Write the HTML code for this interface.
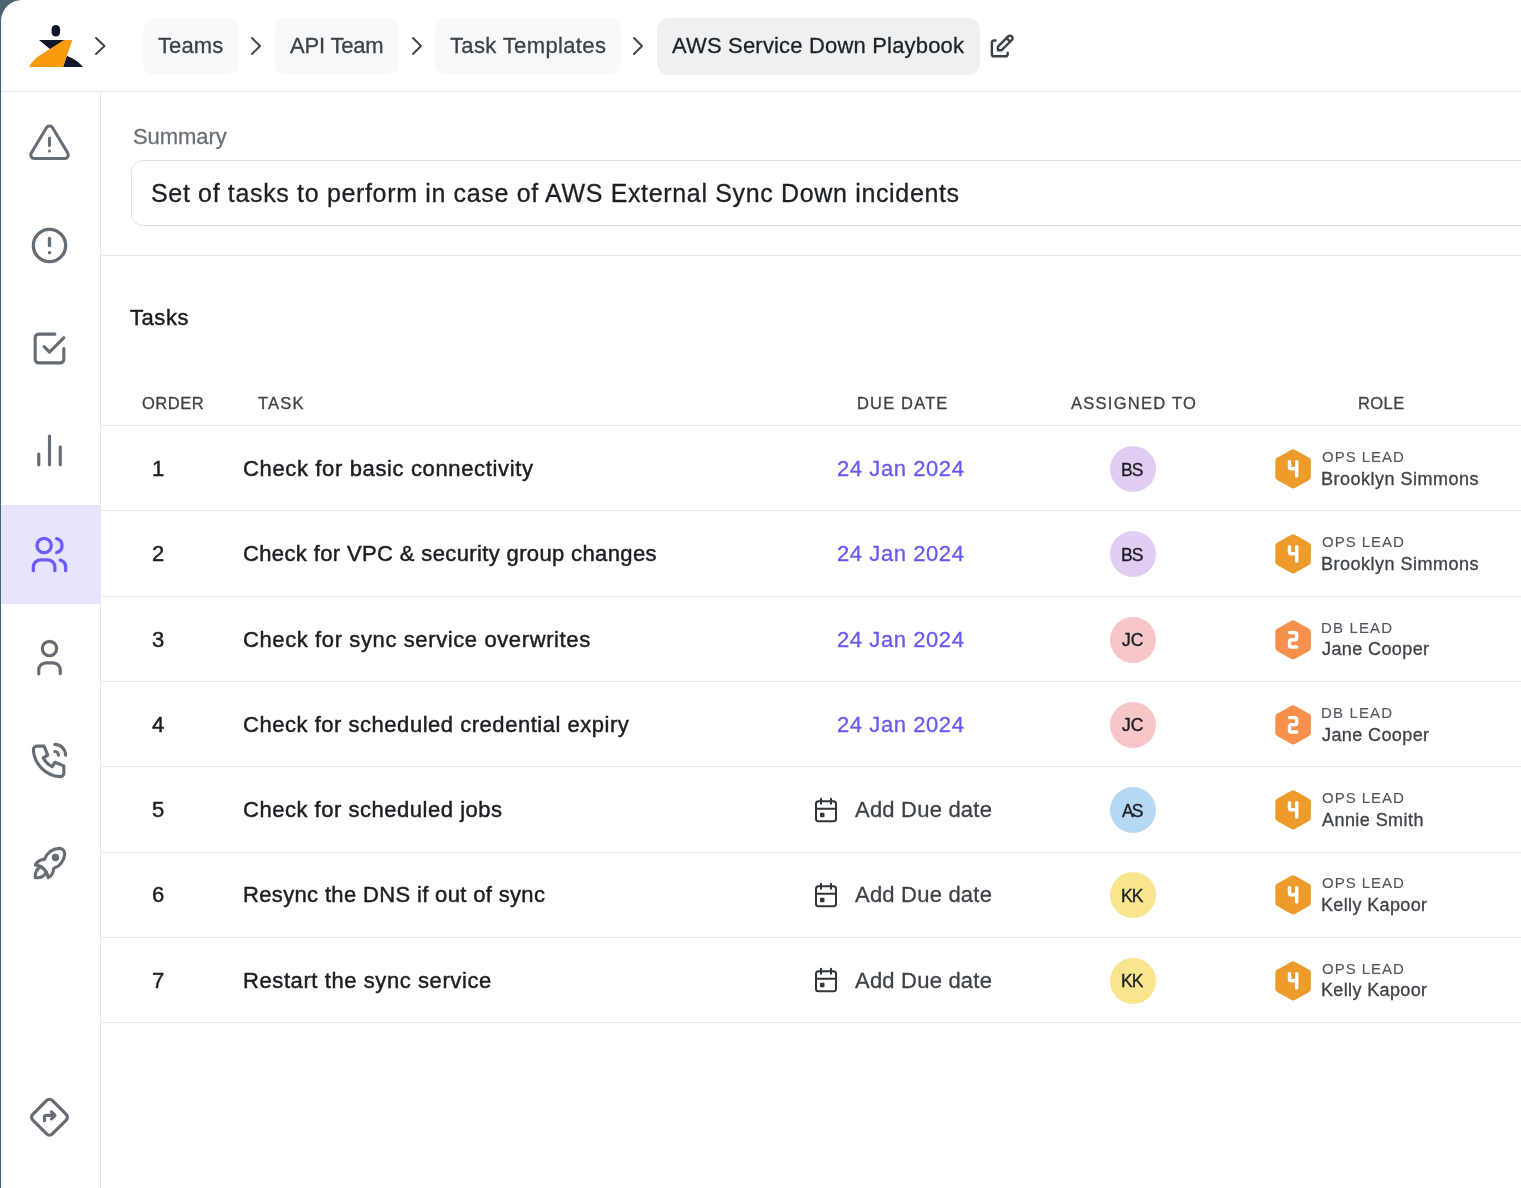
<!DOCTYPE html><html><head><meta charset="utf-8"><style>
html,body{margin:0;padding:0;}
body{width:1521px;height:1188px;overflow:hidden;background:#4b6470;position:relative;font-family:"Liberation Sans",sans-serif;}
#panel{position:absolute;left:1px;top:0;width:1560px;height:1230px;background:#fff;border-top-left-radius:21px;overflow:hidden;}
.t{position:absolute;white-space:nowrap;will-change:transform;-webkit-text-stroke:0.3px currentColor;}
.hl{position:absolute;height:1px;background:#e5e7ea;}
.vl{position:absolute;width:1px;background:#e5e7ea;}
svg{position:absolute;overflow:visible;}
.pill{position:absolute;background:#f8f9fa;border-radius:12px;}
.av{position:absolute;width:46px;height:46px;border-radius:50%;}
</style></head><body><div id="panel">
<div class="hl" style="left:0;top:91px;width:1560px;"></div>
<div class="vl" style="left:99px;top:92px;height:1200px;"></div>
<div class="hl" style="left:100px;top:255px;width:1500px;"></div>
<svg style="left:-1px;top:0px" width="120" height="90" viewBox="0 0 120 90">
<rect x="51.6" y="24.9" width="8.5" height="11.5" rx="4.25" fill="#0f1728"/>
<path d="M39 40 L72.3 40 L50.2 49.2 Z" fill="#0f1728"/>
<path d="M63.1 66.9 L83.1 66.9 Q76 59 66.7 55.8 Z" fill="#0f1728"/>
<path d="M64 40 L72.3 40 L63.1 66.9 L28.9 66.9 Q33 59 45 52 Z" fill="#f99b0c"/>
<path d="M96 38 L104.5 46 L96 54" fill="none" stroke="#3d4247" stroke-width="1.9" stroke-linecap="round" stroke-linejoin="round"/>
</svg>
<div class="pill" style="left:142.4px;top:17.5px;width:95.6px;height:57px;background:#f8f9fa"></div>
<div class="t" id="bc1" style="left:157.00px;top:35.28px;font-size:22px;line-height:22px;color:#3d4247;font-weight:400;letter-spacing:0.100px;">Teams</div>
<div class="pill" style="left:273.9px;top:17.5px;width:124.0px;height:57px;background:#f8f9fa"></div>
<div class="t" id="bc2" style="left:289.00px;top:35.28px;font-size:22px;line-height:22px;color:#3d4247;font-weight:400;letter-spacing:-0.185px;">API Team</div>
<div class="pill" style="left:433.5px;top:17.5px;width:186.4px;height:57px;background:#f8f9fa"></div>
<div class="t" id="bc3" style="left:449.00px;top:35.28px;font-size:22px;line-height:22px;color:#3d4247;font-weight:400;letter-spacing:0.360px;">Task Templates</div>
<div class="pill" style="left:655.5px;top:17.5px;width:323.1px;height:57px;background:#eff0f2"></div>
<div class="t" id="bc4" style="left:671.00px;top:35.28px;font-size:22px;line-height:22px;color:#1d2126;font-weight:400;letter-spacing:0.176px;">AWS Service Down Playbook</div>
<svg style="left:249.4px;top:34.3px" width="16" height="24" viewBox="0 0 16 24"><path d="M2 4 L10 12 L2 20" fill="none" stroke="#3d4247" stroke-width="1.9" stroke-linecap="round" stroke-linejoin="round"/></svg>
<svg style="left:409.5px;top:34.3px" width="16" height="24" viewBox="0 0 16 24"><path d="M2 4 L10 12 L2 20" fill="none" stroke="#3d4247" stroke-width="1.9" stroke-linecap="round" stroke-linejoin="round"/></svg>
<svg style="left:631.2px;top:34.3px" width="16" height="24" viewBox="0 0 16 24"><path d="M2 4 L10 12 L2 20" fill="none" stroke="#3d4247" stroke-width="1.9" stroke-linecap="round" stroke-linejoin="round"/></svg>
<svg style="left:985.6px;top:31.8px" width="29.2" height="29.2" viewBox="0 0 24 24"><g fill="none" stroke="#3d4247" stroke-width="2" stroke-linecap="round" stroke-linejoin="round">
<path d="M7 7h-1a2 2 0 0 0 -2 2v9a2 2 0 0 0 2 2h9a2 2 0 0 0 2 -2v-1"/>
<path d="M20.385 6.585a2.1 2.1 0 0 0 -2.97 -2.97l-8.415 8.385v3h3l8.385 -8.415z"/>
<path d="M16 5l3 3"/></g></svg>
<div class="t" id="sum" style="left:132.00px;top:126.08px;font-size:22px;line-height:22px;color:#6b7178;font-weight:400;letter-spacing:-0.051px;">Summary</div>
<div style="position:absolute;left:129.5px;top:160px;width:1500px;height:66px;border:1px solid #dfe1e5;border-radius:12px;box-sizing:border-box"></div>
<div class="t" id="inp" style="left:150.00px;top:181.34px;font-size:25px;line-height:25px;color:#1c2024;font-weight:400;letter-spacing:0.658px;">Set of tasks to perform in case of AWS External Sync Down incidents</div>
<div class="t" id="tasks" style="left:129.00px;top:307.08px;font-size:22px;line-height:22px;color:#1a1d21;font-weight:400;letter-spacing:0.550px;-webkit-text-stroke:0.45px #1a1d21;">Tasks</div>
<div class="t" id="h1" style="left:141.00px;top:394.53px;font-size:16.5px;line-height:16.5px;color:#3d4247;font-weight:400;letter-spacing:0.525px;">ORDER</div>
<div class="t" id="h2" style="left:257.00px;top:394.53px;font-size:16.5px;line-height:16.5px;color:#3d4247;font-weight:400;letter-spacing:1.198px;">TASK</div>
<div class="t" id="h3" style="left:856.00px;top:394.53px;font-size:16.5px;line-height:16.5px;color:#3d4247;font-weight:400;letter-spacing:1.168px;">DUE DATE</div>
<div class="t" id="h4" style="left:1070.00px;top:394.53px;font-size:16.5px;line-height:16.5px;color:#3d4247;font-weight:400;letter-spacing:1.270px;">ASSIGNED TO</div>
<div class="t" id="h5" style="left:1357.00px;top:394.53px;font-size:16.5px;line-height:16.5px;color:#3d4247;font-weight:400;letter-spacing:0.432px;">ROLE</div>
<div class="hl" style="left:100px;top:425px;width:1500px;"></div>
<div class="hl" style="left:100px;top:510px;width:1500px;"></div>
<div class="hl" style="left:100px;top:596px;width:1500px;"></div>
<div class="hl" style="left:100px;top:681px;width:1500px;"></div>
<div class="hl" style="left:100px;top:766px;width:1500px;"></div>
<div class="hl" style="left:100px;top:852px;width:1500px;"></div>
<div class="hl" style="left:100px;top:937px;width:1500px;"></div>
<div class="hl" style="left:100px;top:1022px;width:1500px;"></div>
<div class="t" id="n0" style="left:151.00px;top:458.18px;font-size:22px;line-height:22px;color:#1a1d21;font-weight:400;letter-spacing:0.000px;-webkit-text-stroke:0.45px #1a1d21;">1</div>
<div class="t" id="task0" style="left:242.00px;top:458.18px;font-size:22px;line-height:22px;color:#1a1d21;font-weight:400;letter-spacing:0.639px;-webkit-text-stroke:0.45px #1a1d21;">Check for basic connectivity</div>
<div class="t" id="date0" style="left:836.00px;top:458.18px;font-size:22px;line-height:22px;color:#6659f5;font-weight:400;letter-spacing:0.580px;">24 Jan 2024</div>
<div class="av" style="left:1109.3px;top:446.00px;background:#e0cdf2"></div>
<div class="t" id="ini0" style="left:1120.00px;top:461.59px;font-size:17.5px;line-height:17.5px;color:#1a1d21;font-weight:400;letter-spacing:-1.000px;-webkit-text-stroke:0.35px #1a1d21;">BS</div>
<svg style="left:1269px;top:440.00px" width="50" height="60" viewBox="0 0 50 60"><path d="M23.10 12.70 L37.40 20.75 L37.40 36.85 L23.10 44.90 L8.80 36.85 L8.80 20.75 Z" fill="#ed9c2b" stroke="#ed9c2b" stroke-width="7" stroke-linejoin="round"/><g transform="translate(1.50 7.20) scale(1.8)" fill="none" stroke="#fff" stroke-width="1.9" stroke-linecap="round" stroke-linejoin="round"><path d="M10 8v3a1 1 0 0 0 1 1h3"/><path d="M14 8v8"/></g></svg>
<div class="t" id="role0" style="left:1321.00px;top:449.20px;font-size:15px;line-height:15px;color:#50565c;font-weight:400;letter-spacing:0.984px;-webkit-text-stroke:0.1px #50565c;">OPS LEAD</div>
<div class="t" id="name0" style="left:1320.00px;top:469.76px;font-size:18px;line-height:18px;color:#3d4247;font-weight:400;letter-spacing:0.492px;">Brooklyn Simmons</div>
<div class="t" id="n1" style="left:151.00px;top:543.43px;font-size:22px;line-height:22px;color:#1a1d21;font-weight:400;letter-spacing:0.000px;-webkit-text-stroke:0.45px #1a1d21;">2</div>
<div class="t" id="task1" style="left:242.00px;top:543.43px;font-size:22px;line-height:22px;color:#1a1d21;font-weight:400;letter-spacing:0.369px;-webkit-text-stroke:0.45px #1a1d21;">Check for VPC &amp; security group changes</div>
<div class="t" id="date1" style="left:836.00px;top:543.43px;font-size:22px;line-height:22px;color:#6659f5;font-weight:400;letter-spacing:0.580px;">24 Jan 2024</div>
<div class="av" style="left:1109.3px;top:531.25px;background:#e0cdf2"></div>
<div class="t" id="ini1" style="left:1120.00px;top:546.84px;font-size:17.5px;line-height:17.5px;color:#1a1d21;font-weight:400;letter-spacing:-1.000px;-webkit-text-stroke:0.35px #1a1d21;">BS</div>
<svg style="left:1269px;top:525.25px" width="50" height="60" viewBox="0 0 50 60"><path d="M23.10 12.70 L37.40 20.75 L37.40 36.85 L23.10 44.90 L8.80 36.85 L8.80 20.75 Z" fill="#ed9c2b" stroke="#ed9c2b" stroke-width="7" stroke-linejoin="round"/><g transform="translate(1.50 7.20) scale(1.8)" fill="none" stroke="#fff" stroke-width="1.9" stroke-linecap="round" stroke-linejoin="round"><path d="M10 8v3a1 1 0 0 0 1 1h3"/><path d="M14 8v8"/></g></svg>
<div class="t" id="role1" style="left:1321.00px;top:534.45px;font-size:15px;line-height:15px;color:#50565c;font-weight:400;letter-spacing:0.984px;-webkit-text-stroke:0.1px #50565c;">OPS LEAD</div>
<div class="t" id="name1" style="left:1320.00px;top:555.01px;font-size:18px;line-height:18px;color:#3d4247;font-weight:400;letter-spacing:0.492px;">Brooklyn Simmons</div>
<div class="t" id="n2" style="left:151.00px;top:628.68px;font-size:22px;line-height:22px;color:#1a1d21;font-weight:400;letter-spacing:0.000px;-webkit-text-stroke:0.45px #1a1d21;">3</div>
<div class="t" id="task2" style="left:242.00px;top:628.68px;font-size:22px;line-height:22px;color:#1a1d21;font-weight:400;letter-spacing:0.609px;-webkit-text-stroke:0.45px #1a1d21;">Check for sync service overwrites</div>
<div class="t" id="date2" style="left:836.00px;top:628.68px;font-size:22px;line-height:22px;color:#6659f5;font-weight:400;letter-spacing:0.580px;">24 Jan 2024</div>
<div class="av" style="left:1109.3px;top:616.50px;background:#f7c6c8"></div>
<div class="t" id="ini2" style="left:1121.00px;top:632.09px;font-size:17.5px;line-height:17.5px;color:#1a1d21;font-weight:400;letter-spacing:0.000px;-webkit-text-stroke:0.35px #1a1d21;">JC</div>
<svg style="left:1269px;top:610.50px" width="50" height="60" viewBox="0 0 50 60"><path d="M23.10 12.70 L37.40 20.75 L37.40 36.85 L23.10 44.90 L8.80 36.85 L8.80 20.75 Z" fill="#f7904c" stroke="#f7904c" stroke-width="7" stroke-linejoin="round"/><g transform="translate(1.50 7.20) scale(1.8)" fill="none" stroke="#fff" stroke-width="1.9" stroke-linecap="round" stroke-linejoin="round"><path d="M10 8h3a1 1 0 0 1 1 1v2a1 1 0 0 1 -1 1h-2a1 1 0 0 0 -1 1v2a1 1 0 0 0 1 1h3"/></g></svg>
<div class="t" id="role2" style="left:1320.00px;top:619.70px;font-size:15px;line-height:15px;color:#50565c;font-weight:400;letter-spacing:1.152px;-webkit-text-stroke:0.1px #50565c;">DB LEAD</div>
<div class="t" id="name2" style="left:1321.00px;top:640.26px;font-size:18px;line-height:18px;color:#3d4247;font-weight:400;letter-spacing:0.400px;">Jane Cooper</div>
<div class="t" id="n3" style="left:151.00px;top:713.93px;font-size:22px;line-height:22px;color:#1a1d21;font-weight:400;letter-spacing:0.000px;-webkit-text-stroke:0.45px #1a1d21;">4</div>
<div class="t" id="task3" style="left:242.00px;top:713.93px;font-size:22px;line-height:22px;color:#1a1d21;font-weight:400;letter-spacing:0.528px;-webkit-text-stroke:0.45px #1a1d21;">Check for scheduled credential expiry</div>
<div class="t" id="date3" style="left:836.00px;top:713.93px;font-size:22px;line-height:22px;color:#6659f5;font-weight:400;letter-spacing:0.580px;">24 Jan 2024</div>
<div class="av" style="left:1109.3px;top:701.75px;background:#f7c6c8"></div>
<div class="t" id="ini3" style="left:1121.00px;top:717.34px;font-size:17.5px;line-height:17.5px;color:#1a1d21;font-weight:400;letter-spacing:0.000px;-webkit-text-stroke:0.35px #1a1d21;">JC</div>
<svg style="left:1269px;top:695.75px" width="50" height="60" viewBox="0 0 50 60"><path d="M23.10 12.70 L37.40 20.75 L37.40 36.85 L23.10 44.90 L8.80 36.85 L8.80 20.75 Z" fill="#f7904c" stroke="#f7904c" stroke-width="7" stroke-linejoin="round"/><g transform="translate(1.50 7.20) scale(1.8)" fill="none" stroke="#fff" stroke-width="1.9" stroke-linecap="round" stroke-linejoin="round"><path d="M10 8h3a1 1 0 0 1 1 1v2a1 1 0 0 1 -1 1h-2a1 1 0 0 0 -1 1v2a1 1 0 0 0 1 1h3"/></g></svg>
<div class="t" id="role3" style="left:1320.00px;top:704.95px;font-size:15px;line-height:15px;color:#50565c;font-weight:400;letter-spacing:1.152px;-webkit-text-stroke:0.1px #50565c;">DB LEAD</div>
<div class="t" id="name3" style="left:1321.00px;top:725.51px;font-size:18px;line-height:18px;color:#3d4247;font-weight:400;letter-spacing:0.400px;">Jane Cooper</div>
<div class="t" id="n4" style="left:151.00px;top:799.18px;font-size:22px;line-height:22px;color:#1a1d21;font-weight:400;letter-spacing:0.000px;-webkit-text-stroke:0.45px #1a1d21;">5</div>
<div class="t" id="task4" style="left:242.00px;top:799.18px;font-size:22px;line-height:22px;color:#1a1d21;font-weight:400;letter-spacing:0.523px;-webkit-text-stroke:0.45px #1a1d21;">Check for scheduled jobs</div>
<svg style="left:810px;top:794.50px" width="30" height="30" viewBox="0 0 24 24"><g fill="none" stroke="#30353a" stroke-width="1.6" stroke-linecap="round" stroke-linejoin="round">
<path d="M4 7a2 2 0 0 1 2 -2h12a2 2 0 0 1 2 2v12a2 2 0 0 1 -2 2h-12a2 2 0 0 1 -2 -2z"/><path d="M16 3v4"/><path d="M8 3v4"/><path d="M4 11h16"/><path d="M8 15h2v2h-2z"/></g></svg>
<div class="t" id="add4" style="left:854.00px;top:799.18px;font-size:22px;line-height:22px;color:#3d4247;font-weight:400;letter-spacing:0.211px;">Add Due date</div>
<div class="av" style="left:1109.3px;top:787.00px;background:#b5d8f5"></div>
<div class="t" id="ini4" style="left:1121.00px;top:802.59px;font-size:17.5px;line-height:17.5px;color:#1a1d21;font-weight:400;letter-spacing:-2.000px;-webkit-text-stroke:0.35px #1a1d21;">AS</div>
<svg style="left:1269px;top:781.00px" width="50" height="60" viewBox="0 0 50 60"><path d="M23.10 12.70 L37.40 20.75 L37.40 36.85 L23.10 44.90 L8.80 36.85 L8.80 20.75 Z" fill="#ed9c2b" stroke="#ed9c2b" stroke-width="7" stroke-linejoin="round"/><g transform="translate(1.50 7.20) scale(1.8)" fill="none" stroke="#fff" stroke-width="1.9" stroke-linecap="round" stroke-linejoin="round"><path d="M10 8v3a1 1 0 0 0 1 1h3"/><path d="M14 8v8"/></g></svg>
<div class="t" id="role4" style="left:1321.00px;top:790.20px;font-size:15px;line-height:15px;color:#50565c;font-weight:400;letter-spacing:0.984px;-webkit-text-stroke:0.1px #50565c;">OPS LEAD</div>
<div class="t" id="name4" style="left:1321.00px;top:810.76px;font-size:18px;line-height:18px;color:#3d4247;font-weight:400;letter-spacing:0.440px;">Annie Smith</div>
<div class="t" id="n5" style="left:151.00px;top:884.43px;font-size:22px;line-height:22px;color:#1a1d21;font-weight:400;letter-spacing:0.000px;-webkit-text-stroke:0.45px #1a1d21;">6</div>
<div class="t" id="task5" style="left:242.00px;top:884.43px;font-size:22px;line-height:22px;color:#1a1d21;font-weight:400;letter-spacing:0.347px;-webkit-text-stroke:0.45px #1a1d21;">Resync the DNS if out of sync</div>
<svg style="left:810px;top:879.75px" width="30" height="30" viewBox="0 0 24 24"><g fill="none" stroke="#30353a" stroke-width="1.6" stroke-linecap="round" stroke-linejoin="round">
<path d="M4 7a2 2 0 0 1 2 -2h12a2 2 0 0 1 2 2v12a2 2 0 0 1 -2 2h-12a2 2 0 0 1 -2 -2z"/><path d="M16 3v4"/><path d="M8 3v4"/><path d="M4 11h16"/><path d="M8 15h2v2h-2z"/></g></svg>
<div class="t" id="add5" style="left:854.00px;top:884.43px;font-size:22px;line-height:22px;color:#3d4247;font-weight:400;letter-spacing:0.211px;">Add Due date</div>
<div class="av" style="left:1109.3px;top:872.25px;background:#f8e58d"></div>
<div class="t" id="ini5" style="left:1120.00px;top:887.84px;font-size:17.5px;line-height:17.5px;color:#1a1d21;font-weight:400;letter-spacing:-1.000px;-webkit-text-stroke:0.35px #1a1d21;">KK</div>
<svg style="left:1269px;top:866.25px" width="50" height="60" viewBox="0 0 50 60"><path d="M23.10 12.70 L37.40 20.75 L37.40 36.85 L23.10 44.90 L8.80 36.85 L8.80 20.75 Z" fill="#ed9c2b" stroke="#ed9c2b" stroke-width="7" stroke-linejoin="round"/><g transform="translate(1.50 7.20) scale(1.8)" fill="none" stroke="#fff" stroke-width="1.9" stroke-linecap="round" stroke-linejoin="round"><path d="M10 8v3a1 1 0 0 0 1 1h3"/><path d="M14 8v8"/></g></svg>
<div class="t" id="role5" style="left:1321.00px;top:875.45px;font-size:15px;line-height:15px;color:#50565c;font-weight:400;letter-spacing:0.984px;-webkit-text-stroke:0.1px #50565c;">OPS LEAD</div>
<div class="t" id="name5" style="left:1320.00px;top:896.01px;font-size:18px;line-height:18px;color:#3d4247;font-weight:400;letter-spacing:0.364px;">Kelly Kapoor</div>
<div class="t" id="n6" style="left:151.00px;top:969.68px;font-size:22px;line-height:22px;color:#1a1d21;font-weight:400;letter-spacing:0.000px;-webkit-text-stroke:0.45px #1a1d21;">7</div>
<div class="t" id="task6" style="left:242.00px;top:969.68px;font-size:22px;line-height:22px;color:#1a1d21;font-weight:400;letter-spacing:0.586px;-webkit-text-stroke:0.45px #1a1d21;">Restart the sync service</div>
<svg style="left:810px;top:965.00px" width="30" height="30" viewBox="0 0 24 24"><g fill="none" stroke="#30353a" stroke-width="1.6" stroke-linecap="round" stroke-linejoin="round">
<path d="M4 7a2 2 0 0 1 2 -2h12a2 2 0 0 1 2 2v12a2 2 0 0 1 -2 2h-12a2 2 0 0 1 -2 -2z"/><path d="M16 3v4"/><path d="M8 3v4"/><path d="M4 11h16"/><path d="M8 15h2v2h-2z"/></g></svg>
<div class="t" id="add6" style="left:854.00px;top:969.68px;font-size:22px;line-height:22px;color:#3d4247;font-weight:400;letter-spacing:0.211px;">Add Due date</div>
<div class="av" style="left:1109.3px;top:957.50px;background:#f8e58d"></div>
<div class="t" id="ini6" style="left:1120.00px;top:973.09px;font-size:17.5px;line-height:17.5px;color:#1a1d21;font-weight:400;letter-spacing:-1.000px;-webkit-text-stroke:0.35px #1a1d21;">KK</div>
<svg style="left:1269px;top:951.50px" width="50" height="60" viewBox="0 0 50 60"><path d="M23.10 12.70 L37.40 20.75 L37.40 36.85 L23.10 44.90 L8.80 36.85 L8.80 20.75 Z" fill="#ed9c2b" stroke="#ed9c2b" stroke-width="7" stroke-linejoin="round"/><g transform="translate(1.50 7.20) scale(1.8)" fill="none" stroke="#fff" stroke-width="1.9" stroke-linecap="round" stroke-linejoin="round"><path d="M10 8v3a1 1 0 0 0 1 1h3"/><path d="M14 8v8"/></g></svg>
<div class="t" id="role6" style="left:1321.00px;top:960.70px;font-size:15px;line-height:15px;color:#50565c;font-weight:400;letter-spacing:0.984px;-webkit-text-stroke:0.1px #50565c;">OPS LEAD</div>
<div class="t" id="name6" style="left:1320.00px;top:981.26px;font-size:18px;line-height:18px;color:#3d4247;font-weight:400;letter-spacing:0.364px;">Kelly Kapoor</div>
<div style="position:absolute;left:0;top:505px;width:99px;height:99px;background:#e7e5fd"></div>
<svg style="left:26.30px;top:120.95px" width="45" height="45" viewBox="0 0 24 24"><g fill="none" stroke="#656c73" stroke-width="1.6" stroke-linecap="round" stroke-linejoin="round"><path d="M12 9v4"/><path d="M10.363 3.591l-8.106 13.534a1.914 1.914 0 0 0 1.636 2.871h16.214a1.914 1.914 0 0 0 1.636 -2.87l-8.106 -13.536a1.914 1.914 0 0 0 -3.274 0z"/><path d="M12 16h.01"/></g></svg>
<svg style="left:27.30px;top:224.00px" width="43" height="43" viewBox="0 0 24 24"><g fill="none" stroke="#656c73" stroke-width="1.85" stroke-linecap="round" stroke-linejoin="round"><path d="M3 12a9 9 0 1 0 18 0a9 9 0 0 0 -18 0"/><path d="M12 8v4"/><path d="M12 16h.01"/></g></svg>
<svg style="left:27.30px;top:326.50px" width="43" height="43" viewBox="0 0 24 24"><g fill="none" stroke="#656c73" stroke-width="1.75" stroke-linecap="round" stroke-linejoin="round"><path d="M9 11l3 3l8 -8"/><path d="M20 12v6a2 2 0 0 1 -2 2h-12a2 2 0 0 1 -2 -2v-12a2 2 0 0 1 2 -2h9"/></g></svg>
<svg style="left:27.40px;top:429.30px" width="43" height="43" viewBox="0 0 24 24"><g fill="none" stroke="#656c73" stroke-width="1.75" stroke-linecap="round" stroke-linejoin="round"><path d="M6 20v-6"/><path d="M12 20v-16"/><path d="M18 20v-10"/></g></svg>
<svg style="left:26.85px;top:532.90px" width="43" height="43" viewBox="0 0 24 24"><g fill="none" stroke="#6a5cf6" stroke-width="1.85" stroke-linecap="round" stroke-linejoin="round"><path d="M5 7a4 4 0 1 0 8 0a4 4 0 1 0 -8 0"/><path d="M3 21v-2a4 4 0 0 1 4 -4h4a4 4 0 0 1 4 4v2"/><path d="M16 3.13a4 4 0 0 1 0 7.75"/><path d="M21 21v-2a4 4 0 0 0 -3 -3.85"/></g></svg>
<svg style="left:27.46px;top:635.80px" width="43" height="43" viewBox="0 0 24 24"><g fill="none" stroke="#656c73" stroke-width="1.75" stroke-linecap="round" stroke-linejoin="round"><path d="M8 7a4 4 0 1 0 8 0a4 4 0 0 0 -8 0"/><path d="M6 21v-2a4 4 0 0 1 4 -4h4a4 4 0 0 1 4 4v2"/></g></svg>
<svg style="left:26.75px;top:738.80px" width="43" height="43" viewBox="0 0 24 24"><g fill="none" stroke="#656c73" stroke-width="1.75" stroke-linecap="round" stroke-linejoin="round"><path d="M5 4h4l2 5l-2.5 1.5a11 11 0 0 0 5 5l1.5 -2.5l5 2v4a2 2 0 0 1 -2 2a16 16 0 0 1 -15 -15a2 2 0 0 1 2 -2"/><path d="M15 7a2 2 0 0 1 2 2"/><path d="M15 3a6 6 0 0 1 6 6"/></g></svg>
<svg style="left:26.60px;top:840.50px" width="44" height="44" viewBox="0 0 24 24"><g fill="none" stroke="#656c73" stroke-width="1.7" stroke-linecap="round" stroke-linejoin="round"><path d="M4 13a8 8 0 0 1 7 7a6 6 0 0 0 3 -5a9 9 0 0 0 6 -8a3 3 0 0 0 -3 -3a9 9 0 0 0 -8 6a6 6 0 0 0 -5 3"/><path d="M7 14a6 6 0 0 0 -3 6a6 6 0 0 0 6 -3"/><circle cx="15" cy="9" r="2" fill="#656c73" stroke="none"/></g></svg>
<svg style="left:-1px;top:0px" width="100" height="1188" viewBox="0 0 100 1188"><g fill="none" stroke="#656c73" stroke-width="3.2" stroke-linecap="round" stroke-linejoin="round"><rect x="35.67" y="1103.3700000000001" width="27.66" height="27.66" rx="4" transform="rotate(45 49.5 1117.2)"/><path d="M44.4 1120.7V1117.4a2 2 0 0 1 2 -2H54.5"/><path d="M51.5 1111.9L55 1115.4L51.5 1118.9"/></g></svg>
</div></body></html>
